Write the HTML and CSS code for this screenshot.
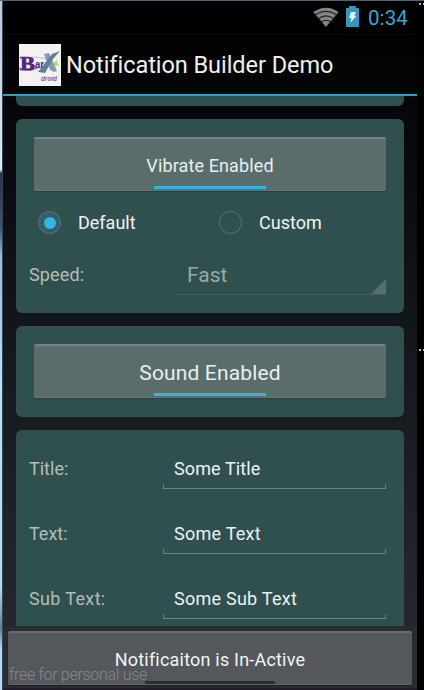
FILE: index.html
```html
<!DOCTYPE html>
<html lang="en">
<head>
<meta charset="utf-8">
<title>Notification Builder Demo</title>
<link rel="stylesheet" href="styles.css">
</head>
<body>
<div class="desktop">
  <main class="phone">
    <div class="status">
      <svg class="wifi" width="26" height="20" viewBox="0 0 26 20">
        <path d="M.5 5Q13-3.500 25.500 5L13 20z" fill="#858585"/>
        <g fill="none" stroke="#222" stroke-width="1.1"><path d="M2 8.200Q13 .5 24 8.200"/><path d="M5 11.800Q13 6 21 11.800"/><path d="M8 15Q13 11.600 18 15"/></g>
      </svg>
      <svg class="battery" width="13" height="21" viewBox="0 0 13 21">
        <path d="M3 0h7v2h3v19H0V2h3z" fill="#3697bd"/>
        <path d="M5 6h5L8.300 9.500l2 .4L4.300 17l1-4.800-2.300-.4z" fill="#e8f5fa"/>
      </svg>
      <span class="clock">0:34</span>
    </div>
    <header class="actionbar">
      <svg class="logo" width="42" height="42" viewBox="0 0 42 42">
        <rect width="42" height="42" fill="#f3f2f3"/>
        <path d="M0 15Q18 11 30 16" fill="none" stroke="#c5cdd6" stroke-width="1.200"/>
        <path d="M34 19l5-3-1 3 2 2-4 1z" fill="#b7dc45"/>
        <path d="M25 10l5-1 8 18-3 1-4-2z" fill="#829bb0"/>
        <path d="M41 7l-8 3-14 18 7 1 8-14z" fill="#637f98"/>
        <path d="M0 24Q8 29 20 23" fill="none" stroke="#8795a8" stroke-width="1.500"/>
        <text x="1" y="26" class="logo-b" textLength="15" lengthAdjust="spacingAndGlyphs">B</text>
        <text x="16" y="24" class="logo-ar" textLength="9" lengthAdjust="spacingAndGlyphs">ar</text>
        <text x="22" y="37" class="logo-droid" textLength="16" lengthAdjust="spacingAndGlyphs">droid</text>
      </svg>
      <h1>Notification Builder Demo</h1>
    </header>
    <div class="scroll">
      <section class="card card-end"></section>
      <section class="card card-vibrate">
        <button class="toggle"><span class="t-vibrate">Vibrate Enabled</span></button>
        <div class="radios">
          <label><i class="radio on"></i><span>Default</span></label>
          <label><i class="radio"></i><span>Custom</span></label>
        </div>
        <div class="speed">
          <span class="label t-speed">Speed:</span>
          <div class="spinner"><span>Fast</span></div>
        </div>
      </section>
      <section class="card card-sound">
        <button class="toggle"><span class="t-sound">Sound Enabled</span></button>
      </section>
      <section class="card card-form">
        <div class="field"><span class="label">Title:</span><div class="edit"><span class="v-title">Some Title</span></div></div>
        <div class="field"><span class="label">Text:</span><div class="edit"><span class="v-text">Some Text</span></div></div>
        <div class="field"><span class="label t-sub">Sub Text:</span><div class="edit"><span class="v-sub">Some Sub Text</span></div></div>
      </section>
    </div>
    <footer class="bottom">
      <button class="toggle off"><span class="t-active">Notificaiton is In-Active</span></button>
      <span class="watermark">free for personal use</span>
    </footer>
  </main>
  <aside class="edge"><i></i><i></i></aside>
</div>
</body>
</html>
```
FILE: styles.css
```css
* { box-sizing: border-box; }
body { margin: 0; background: #000; font-family: Roboto, "Liberation Sans", sans-serif; font-size: 18px; color: #f0f3f3; overflow: hidden; }
span, h1 { white-space: nowrap; }
.desktop { display: flex; width: 424px; height: 690px; border-top: 1px solid #526070; }
.desktop::before { content: ""; width: 3px; background: linear-gradient(90deg, transparent 66%, #344553 66%), linear-gradient(#b9cadb, #dce8f3 24.500%, #25344d 25%, #41536e 33%, #91bde7 37%, #bcdcf8 55%, #b9d9f6 85%, #657e98 91%, #b5d6f2 94%); }
.phone { width: 414px; display: flex; flex-direction: column; background: linear-gradient(#000, #06070a 16%, #14171b 50%, #282b33); }
.status { height: 33px; display: flex; align-items: flex-start; background: #000; padding-left: 310px; }
.wifi { margin-top: 6px; }
.battery { margin: 5px 0 0 7px; }
.clock { margin: 5px 0 0 9px; font-size: 20.500px; line-height: 24px; color: #33a7d5; letter-spacing: .1px; }
.actionbar { height: 62px; flex: none; display: flex; align-items: center; border-top: 1px solid #0b0b0b; border-bottom: 2px solid #2c9fcd; padding-left: 16px; background: linear-gradient(#020202, #050608); }
.logo { flex: none; }
.logo-b { font: bold 19px "Liberation Serif", serif; fill: #57247e; stroke: #57247e; stroke-width: .7px; }
.logo-ar { font: bold 10px "Liberation Sans", sans-serif; fill: #57247e; }
.logo-droid { font: italic bold 6.500px "Liberation Sans", sans-serif; fill: #93539b; }
h1 { margin: 0 0 0 5px; font-size: 23.500px; line-height: 30px; font-weight: 400; color: #efefef; letter-spacing: -.05px; }
.scroll { height: 530px; flex: none; overflow: hidden; padding: 0 13px; }
.card { background: #30504f; border-radius: 6px; margin-bottom: 13px; }
.card-end { height: 10px; border-radius: 0 0 6px 6px; }
.card-vibrate { height: 194px; padding: 18px 18px 0; }
.card-sound { height: 91px; padding: 18px 18px 0; }
.card-form { height: 220px; padding: 7px 18px 0 13px; }
.toggle { display: flex; flex-direction: column; align-items: center; width: 100%; height: 54px; padding: 0; border: 0; border-top: 2px solid #708481; border-bottom: 1px solid #657774; border-radius: 2px; background: #5a6d6b; box-shadow: 0 1px 1px #263f3e; color: #e7eff1; font: 18px/54px Roboto, sans-serif; }
.toggle span { height: 47px; }
.toggle::after { content: ""; width: 112px; height: 3px; background: #33b5e5; }
.toggle .t-vibrate { letter-spacing: .12px; }
.toggle .t-sound { font-size: 21px; letter-spacing: .15px; }
.toggle .t-active { letter-spacing: .2px; }
.t-speed { letter-spacing: .15px; }
.t-sub { letter-spacing: .35px; }
.v-title { letter-spacing: .1px; }
.v-text { letter-spacing: .25px; }
.v-sub { letter-spacing: .25px; }
.radios { display: flex; height: 63px; padding-left: 4px; align-items: center; }
.radios label { display: flex; flex: none; align-items: center; width: 181px; gap: 17px; }
.radios label + label { width: 160px; }
.radio { width: 23px; height: 23px; border: 1px solid #5b7573; border-radius: 50%; display: grid; place-items: center; }
.radio.on { background: #315e69; border-color: #587875; }
.radio.on::after { content: ""; width: 12px; height: 12px; border-radius: 50%; background: #33b5e5; }
.speed { display: flex; height: 41px; margin-left: -5px; }
.label { color: #b4bcb9; font-size: 18px; line-height: 42px; }
.speed .label { width: 146px; }
.spinner { position: relative; width: 211px; border-bottom: 1px solid #405e5d; padding-left: 12px; font-size: 21px; line-height: 42px; color: #99a9a7; }
.spinner::after { content: ""; position: absolute; right: 0; bottom: 0; width: 15px; height: 15px; background: #566f6d; clip-path: polygon(100% 0, 100% 100%, 0 100%); }
.field { display: flex; height: 65px; }
.field .label { width: 134px; line-height: 64px; }
.edit { position: relative; width: 223px; height: 52px; border-bottom: 1px solid #6b8381; padding-left: 11px; line-height: 64px; color: #eff2f1; }
.edit::after { content: ""; position: absolute; left: 0; right: 0; bottom: 0; height: 4px; border: 1px solid #6b8381; border-width: 0 1px; }
.bottom { position: relative; flex: 1; padding: 5px 5px 0; background: #282c31; border-bottom: 2px solid #241b2b; }
.off { height: 54px; background: #54575b; border-top-color: #6a6d70; border-bottom-color: #63676a; box-shadow: 0 1px 1px #1c1e21; line-height: 54px; color: #f0f4f8; }
.off span { height: 48px; }
.off::after { width: 130px; background: #2d2e31; }
.watermark { position: absolute; left: 6px; bottom: 2px; font-size: 16px; line-height: 22px; font-weight: 300; letter-spacing: -.3px; color: #85888b; }
.edge { width: 7px; display: flex; flex-direction: column; gap: 344px; padding: 2px 0 0 2px; background: #000; }
.edge i { height: 2px; background: repeating-linear-gradient(90deg, #bbb 0 2px, #000 2px 4px); }
```
